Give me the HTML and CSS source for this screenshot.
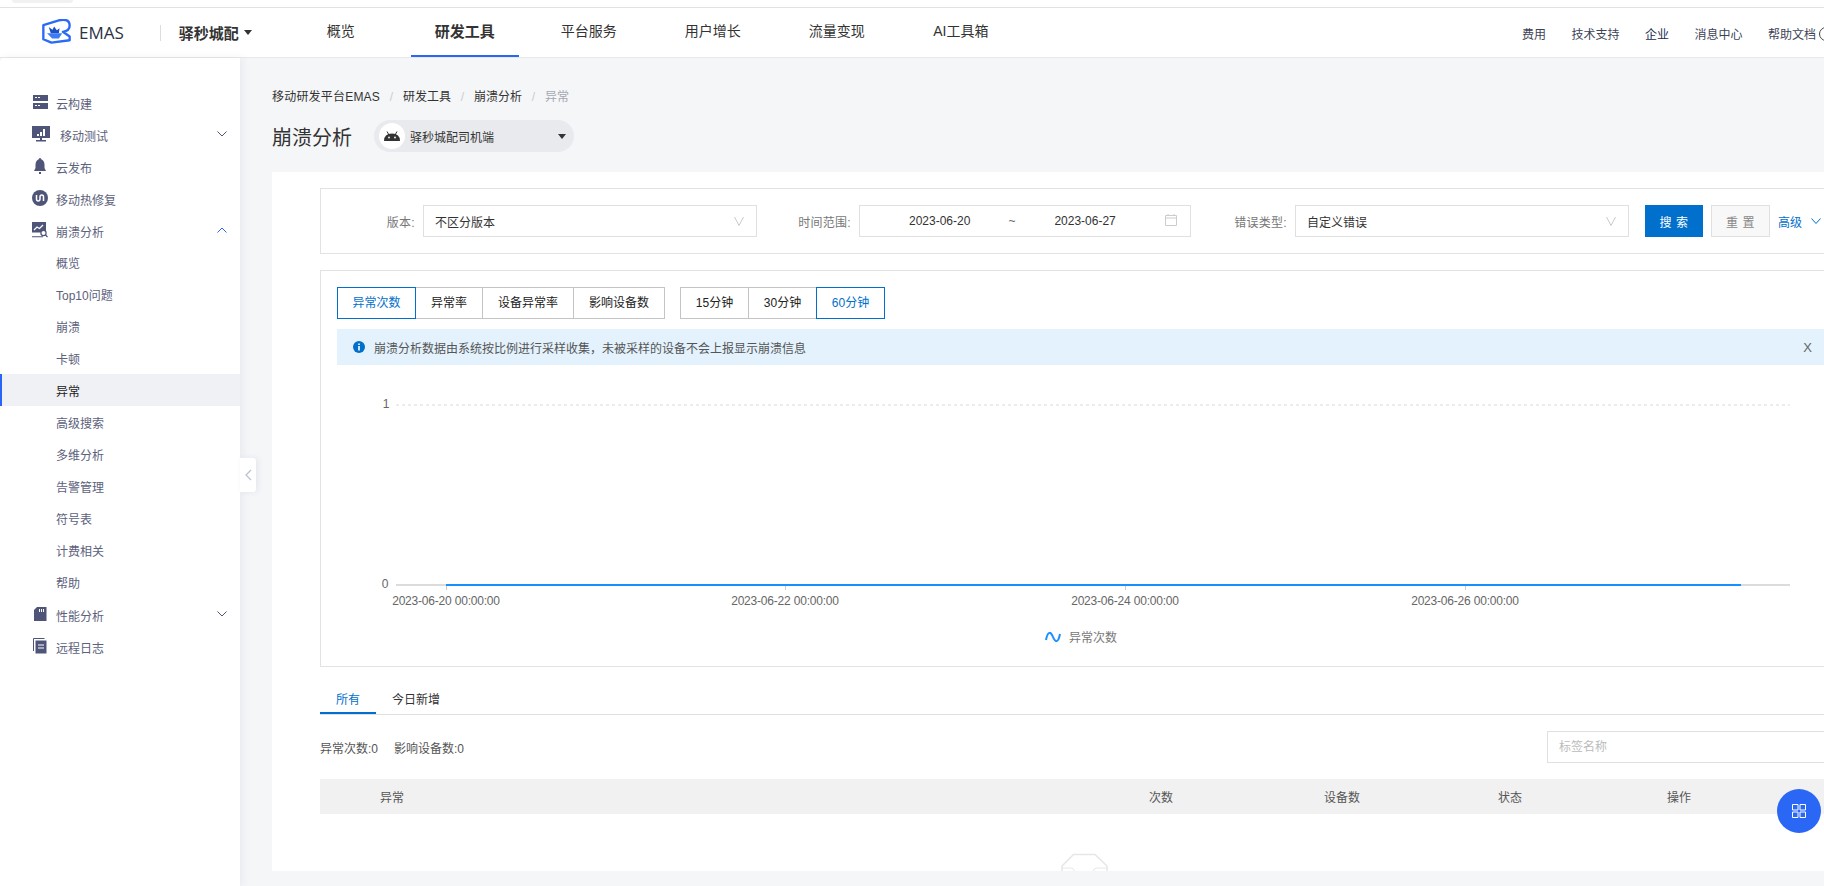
FILE: index.html
```html
<!DOCTYPE html>
<html lang="zh-CN">
<head>
  <meta charset="UTF-8">
  <title>EMAS 崩溃分析</title>
  <link rel="stylesheet" href="styles.css">
</head>
<body>
  <div class="browser-strip"><span class="browser-tab"></span></div>

  <header class="topnav">
    <svg class="logo" viewBox="0 0 86 74">
      <path d="M4 18 L50 4 Q58 2 70 3 Q82 5 82 20 Q82 35 62 38 L82 52 L82 63 L28 70 L4 60 Z" fill="none" stroke="#2a6af5" stroke-width="7" stroke-linejoin="round"/>
      <path d="M20 24 L31 32 L36 22 L44 33 L52 27 L50 42 L26 42 Z" fill="#1f4fc4"/>
      <path d="M15 42 L60 42 L50 58 L30 58 Z" fill="#3d7bf7"/>
    </svg>
    <span class="brand">EMAS</span>
    <span class="brand-sep"></span>
    <span class="project">驿秒城配</span>
    <span class="caret project-caret"></span>
    <nav class="nav-main">
      <a class="nav-item">概览</a>
      <a class="nav-item active">研发工具</a>
      <a class="nav-item">平台服务</a>
      <a class="nav-item">用户增长</a>
      <a class="nav-item">流量变现</a>
      <a class="nav-item">AI工具箱</a>
    </nav>
    <div class="nav-right">
      <a>费用</a>
      <a>技术支持</a>
      <a class="dark">企业</a>
      <a>消息中心</a>
      <a class="help">帮助文档<span class="help-ring"></span></a>
    </div>
  </header>

  <div class="layout">
    <aside class="sidebar">
      <a class="side-item">
        <svg class="side-icon" viewBox="0 0 16 16"><path d="M1 1h15v6H1zM1 9h15v6H1z" fill="#4f5578"/><path d="M3 3.500h2M6 3.500h2M3 11.500h2M6 11.500h2" stroke="#fff" stroke-width="1"/></svg>
        <span>云构建</span>
      </a>
      <a class="side-item has-child wide">
        <svg class="side-icon monitor" viewBox="0 0 18 16"><path d="M0 0h18v12H0z" fill="#4f5578"/><path d="M8 12h2v2H8zM4 14h10v1.400H4z" fill="#4f5578"/><path d="M5 8h2v2H5zM8 6h2v4H8zM11 3h2v7h-2z" fill="#fff"/></svg>
        <span>移动测试</span>
        <svg class="chev" viewBox="0 0 10 6"><path d="M.5.500 5 5 9.500.500" fill="none" stroke="#4f5578"/></svg>
      </a>
      <a class="side-item">
        <svg class="side-icon" viewBox="0 0 16 16"><path d="M8 0q1.300 0 1.500 1.600Q12.500 3 12.500 7v3l1.500 3H2l1.500-3V7Q3.500 3 6.500 1.600 6.700 0 8 0z" fill="#4f5578"/><path d="M7 14h2v2H7z" fill="#4f5578"/></svg>
        <span>云发布</span>
      </a>
      <a class="side-item">
        <svg class="side-icon" viewBox="0 0 16 16"><circle cx="8" cy="8" r="8" fill="#4f5578"/><path d="M4.500 5v4q0 2 1.700 2T8 9V7q0-2 1.800-2t1.700 2v4" fill="none" stroke="#fff" stroke-width="1.500"/></svg>
        <span>移动热修复</span>
      </a>
      <a class="side-item has-child">
        <svg class="side-icon" viewBox="0 0 16 16"><path d="M0 0h14v10.500H0zM0 14.300h11v1H0z" fill="#4f5578"/><path d="M2 8l3-3 2.500 1.500L11 3" fill="none" stroke="#fff" stroke-width="1.200"/><circle cx="11.500" cy="11" r="2.600" fill="#fff" stroke="#4f5578" stroke-width="1.200"/><path d="M13.500 13l2 2" stroke="#4f5578" stroke-width="1.200"/></svg>
        <span>崩溃分析</span>
        <svg class="chev" viewBox="0 0 10 6"><path d="M.5 5.500 5 1l4.500 4.500" fill="none" stroke="#2a66f6"/></svg>
      </a>
      <a class="side-item">概览</a>
      <a class="side-item">Top10问题</a>
      <a class="side-item">崩溃</a>
      <a class="side-item">卡顿</a>
      <a class="side-item current">异常</a>
      <a class="side-item">高级搜索</a>
      <a class="side-item">多维分析</a>
      <a class="side-item">告警管理</a>
      <a class="side-item">符号表</a>
      <a class="side-item">计费相关</a>
      <a class="side-item">帮助</a>
      <a class="side-item has-child">
        <svg class="side-icon" viewBox="0 0 16 16"><path d="M5 1h9.500v14H2V4z" fill="#4f5578"/><path d="M7 3h1v3H7zM9 3h1v3H9zM11 3h1v3h-1z" fill="#fff"/></svg>
        <span>性能分析</span>
        <svg class="chev" viewBox="0 0 10 6"><path d="M.5.500 5 5 9.500.500" fill="none" stroke="#4f5578"/></svg>
      </a>
      <a class="side-item">
        <svg class="side-icon" viewBox="0 0 16 16"><path d="M1.500 13V.5h11" fill="none" stroke="#4f5578"/><path d="M3.500 2.500h11v13h-11z" fill="#4f5578"/><path d="M6 7h6M6 10h6" stroke="#fff" stroke-width="1.200"/></svg>
        <span>远程日志</span>
      </a>
      <div class="collapse-btn">
        <svg viewBox="0 0 7 12"><path d="M6 1 1 6l5 5" fill="none" stroke="#b9bfd0" stroke-width="1.200"/></svg>
      </div>
    </aside>

    <main class="main">
      <div class="breadcrumb">
        <a class="crumb-root">移动研发平台EMAS</a><i>/</i><a>研发工具</a><i>/</i><a>崩溃分析</a><i>/</i><span>异常</span>
      </div>

      <div class="page-head">
        <h1>崩溃分析</h1>
        <div class="app-pill">
          <span class="app-avatar">
            <svg viewBox="0 0 18 10" width="18" height="10"><path d="M1 10Q1 2.500 9 2.500T17 10z" fill="#333"/><path d="M4 .5 6 4M14 .5 12 4" stroke="#333" stroke-width="1"/><circle cx="6" cy="6.500" r=".9" fill="#fff"/><circle cx="12" cy="6.500" r=".9" fill="#fff"/></svg>
          </span>
          <span class="app-name">驿秒城配司机端</span>
          <span class="caret pill-caret"></span>
        </div>
      </div>

      <section class="card">
        <div class="filter-box">
          <label class="field-label first">版本:</label>
          <div class="select w334">
            <span>不区分版本</span>
            <svg class="select-arrow" viewBox="0 0 10 10"><path d="M.5 1 5 9.500 9.500 1" fill="none" stroke="#c8c8c8"/></svg>
          </div>
          <label class="field-label second">时间范围:</label>
          <div class="date-range">
            <span class="date-from">2023-06-20</span>
            <span class="date-to-sign">~</span>
            <span class="date-to">2023-06-27</span>
            <svg class="calendar" viewBox="0 0 12 12"><path d="M.5 1.500h11v10H.5zM.5 4h11M3 0v2M9 0v2" fill="none" stroke="#ccc"/></svg>
          </div>
          <label class="field-label third">错误类型:</label>
          <div class="select w334">
            <span>自定义错误</span>
            <svg class="select-arrow" viewBox="0 0 10 10"><path d="M.5 1 5 9.500 9.500 1" fill="none" stroke="#c8c8c8"/></svg>
          </div>
          <button class="btn-primary">搜 索</button>
          <button class="btn-default">重 置</button>
          <a class="advanced">高级</a>
          <svg class="advanced-arrow" viewBox="0 0 10 6"><path d="M.5.500 5 5.500 9.500.500" fill="none" stroke="#0070cc"/></svg>
        </div>

        <div class="chart-box">
          <div class="switches">
            <div class="btn-group">
              <a class="switch w79 on">异常次数</a>
              <a class="switch w68">异常率</a>
              <a class="switch w92">设备异常率</a>
              <a class="switch w92">影响设备数</a>
            </div>
            <div class="btn-group">
              <a class="switch w69">15分钟</a>
              <a class="switch w69">30分钟</a>
              <a class="switch w69 on">60分钟</a>
            </div>
          </div>

          <div class="alert">
            <svg class="alert-icon" viewBox="0 0 12 12"><circle cx="6" cy="6" r="6" fill="#0070cc"/><path d="M5.200 2.500h1.600v1.500H5.200zM5.200 5h1.600v4.500H5.200z" fill="#fff"/></svg>
            <span>崩溃分析数据由系统按比例进行采样收集，未被采样的设备不会上报显示崩溃信息</span>
            <span class="alert-close">X</span>
          </div>

          <svg class="chart" viewBox="337 365 1506 300">
            <text class="axis-label" x="386" y="408" text-anchor="middle">1</text>
            <text class="axis-label" x="385" y="588" text-anchor="middle">0</text>
            <path d="M396 405H1790" stroke="#ececec" stroke-width="2" stroke-dasharray="3 3"/>
            <path d="M396 585H1790" stroke="#dcdcdc" stroke-width="2"/>
            <path d="M446.500 586v4M785.500 586v4M1125.500 586v4M1465.500 586v4" stroke="#ccc"/>
            <path d="M446 585H1741" stroke="#1890ff" stroke-width="2"/>
            <text class="tick-label" x="446" y="605" text-anchor="middle">2023-06-20 00:00:00</text>
            <text class="tick-label" x="785" y="605" text-anchor="middle">2023-06-22 00:00:00</text>
            <text class="tick-label" x="1125" y="605" text-anchor="middle">2023-06-24 00:00:00</text>
            <text class="tick-label" x="1465" y="605" text-anchor="middle">2023-06-26 00:00:00</text>
            <path d="M1046 640C1048 630 1051 632 1053 637S1058 644 1060 634" fill="none" stroke="#1890ff" stroke-width="2"/>
            <text class="legend-label" x="1069" y="642">异常次数</text>
          </svg>
        </div>

        <div class="tabs">
          <a class="tab active">所有</a>
          <a class="tab">今日新增</a>
        </div>

        <div class="summary">
          <span>异常次数:0</span>
          <span>影响设备数:0</span>
          <input class="tag-input" type="text" placeholder="标签名称">
        </div>

        <div class="table-head">
          <span>异常</span>
          <span>次数</span>
          <span>设备数</span>
          <span>状态</span>
          <span>操作</span>
        </div>

        <svg class="empty-icon" viewBox="0 0 48 40">
          <path d="M1 19V13L12.500 1.500H34L46 13V19" fill="none" stroke="#e6e6e6" stroke-width="1.500"/>
          <path d="M1 15H10Q13.500 15 13.500 19M32 19Q32 15 36 15H46" fill="none" stroke="#e8e8e8"/>
        </svg>
      </section>
    </main>
  </div>

  <button class="fab">
    <svg viewBox="0 0 14 14" width="14" height="14"><path d="M.5.500h5.500v5.500H.5zM8 .5h5.500v5.500H8zM.5 8h5.500v5.500H.5zM8 8h5.500v5.500H8z" fill="none" stroke="#fff"/></svg>
  </button>
</body>
</html>
```

FILE: styles.css
```css
* {
  box-sizing: border-box;
}

body {
  margin: 0;
  width: 1824px;
  height: 886px;
  overflow: hidden;
  background-color: #f5f6f8;
  color: #333;
  font-family: "Liberation Sans", "Noto Sans CJK SC", sans-serif;
  font-size: 12px;
}

a {
  text-decoration: none;
  color: inherit;
}

/* top strip of the browser */
.browser-strip {
  height: 8px;
  background-color: #fff;
  border-bottom: 1px solid #e2e2e2;
  padding-left: 12px;
}

.browser-tab {
  display: block;
  width: 61px;
  height: 3px;
  background-color: #f1f1f1;
  border-radius: 0 0 8px 8px;
}

/* header */
.topnav {
  height: 50px;
  background-color: #fff;
  border-bottom: 1px solid #e8e8e8;
  display: flex;
  align-items: center;
  padding-left: 42px;
}

.logo {
  width: 29px;
  height: 25px;
  flex: none;
  margin-top: -2px;
}

.brand {
  margin-left: 8px;
  font-family: "Open Sans", sans-serif;
  font-size: 17px;
  color: #2b3245;
}

.brand-sep {
  width: 1px;
  height: 16px;
  background-color: #ddd;
  margin-left: 36px;
}

.project {
  margin-left: 18px;
  font-size: 15px;
  font-weight: bold;
}

.caret {
  width: 0;
  height: 0;
  border-left: 4px solid transparent;
  border-right: 4px solid transparent;
  border-top: 5px solid #333;
}

.project-caret {
  margin-left: 5px;
  margin-right: -1px;
}

.nav-main {
  display: flex;
  gap: 16px;
  margin-left: 36px;
  height: 100%;
}

.nav-item {
  width: 108px;
  font-size: 14px;
  line-height: 47px;
  text-align: center;
  border-bottom: 2px solid transparent;
  height: 49px;
}

.nav-item.active {
  font-size: 15px;
  font-weight: bold;
  border-bottom-color: #2a66f6;
}

.nav-right {
  display: flex;
  gap: 25.500px;
  margin-left: auto;
  margin-right: -9px;
  padding-top: 2px;
  color: #3d4357;
}

.nav-right .dark {
  color: #1b2a52;
}

.help {
  display: flex;
  align-items: center;
  gap: 3px;
}

.help-ring {
  width: 14px;
  height: 14px;
  border: 1px solid #444;
  border-radius: 50%;
}

/* page */
.layout {
  display: flex;
  height: 828px;
}

.sidebar {
  position: relative;
  z-index: 2;
  flex: none;
  width: 240px;
  padding-top: 28px;
  background-color: #fff;
  border-top-left-radius: 4px;
  box-shadow: 2px 0 8px rgba(40, 50, 90, 0.07);
}

.side-item {
  display: flex;
  align-items: center;
  height: 32px;
  padding-left: 56px;
  color: #5c617c;
  font-size: 12px;
}

.side-item span {
  padding-top: 3px;
}

.side-item .side-icon {
  width: 16px;
  height: 16px;
  margin-left: -24px;
  margin-right: 8px;
  flex: none;
}

.side-item .monitor {
  width: 18px;
  margin-right: 10px;
  margin-left: -24px;
}

.side-item .chev {
  width: 10px;
  height: 6px;
  margin-left: auto;
  margin-right: 13px;
}

.side-item.current {
  background-color: #f0f1f5;
  border-left: 2px solid #2a66f6;
  padding-left: 54px;
  color: #222;
}

.collapse-btn {
  position: absolute;
  left: 240px;
  top: 400px;
  width: 16px;
  height: 34px;
  display: flex;
  align-items: center;
  justify-content: center;
  background-color: #fff;
  border-radius: 0 3px 3px 0;
  box-shadow: 2px 0 6px rgba(40, 50, 90, 0.08);
}

.collapse-btn svg {
  width: 7px;
  height: 12px;
}

.main {
  flex: none;
  width: 1584px;
  padding: 29px 0 0 32px;
}

.breadcrumb {
  height: 20px;
  line-height: 20px;
  display: flex;
}

.crumb-root {
  width: 108px;
  letter-spacing: 0.2px;
}

.breadcrumb i {
  font-style: normal;
  width: 23px;
  text-align: center;
  color: #ccc;
}

.breadcrumb span {
  color: #a5a8b0;
}

.page-head {
  display: flex;
  align-items: center;
  margin-top: 13px;
  height: 32px;
}

.page-head h1 {
  margin: 0;
  font-size: 20px;
  font-weight: normal;
  width: 102px;
}

.app-pill {
  display: flex;
  align-items: center;
  width: 200px;
  height: 32px;
  padding-left: 5px;
  background-color: #e9eaed;
  border-radius: 16px;
}

.app-avatar {
  display: flex;
  align-items: center;
  justify-content: center;
  width: 26px;
  height: 26px;
  background-color: #fff;
  border-radius: 50%;
}

.app-name {
  margin-left: 5px;
}

.pill-caret {
  margin-left: 64px;
}

.card {
  margin-top: 20px;
  width: 1588px;
  height: 699px;
  padding: 16px 0 0 48px;
  background-color: #fff;
  overflow: hidden;
}

.filter-box {
  display: flex;
  align-items: center;
  width: 1540px;
  height: 66px;
  border: 1px solid #e2e2e2;
}

.field-label {
  flex: none;
  width: 95px;
  margin-right: 8px;
  text-align: right;
  color: #777;
  letter-spacing: 0.3px;
}

.field-label.first,
.field-label.second {
  width: 94px;
}

.field-label.third {
  width: 96px;
}

.select {
  flex: none;
  display: flex;
  align-items: center;
  justify-content: space-between;
  height: 32px;
  padding: 0 12px 0 11px;
  border: 1px solid #e0e0e0;
}

.w334 {
  width: 334px;
}

.select-arrow {
  width: 10px;
  height: 10px;
}

.date-range {
  flex: none;
  display: flex;
  align-items: center;
  width: 332px;
  height: 32px;
  border: 1px solid #e0e0e0;
}

.date-from {
  margin-left: 49px;
}

.date-to-sign {
  margin-left: 38px;
  color: #666;
}

.date-to {
  margin-left: 39px;
}

.calendar {
  width: 12px;
  height: 12px;
  margin-left: auto;
  margin-right: 13px;
  margin-top: -2px;
}

.btn-primary,
.btn-default {
  flex: none;
  height: 32px;
  width: 58px;
  font-family: inherit;
  font-size: 12px;
  letter-spacing: 0.5px;
  padding: 0;
}

.btn-primary {
  margin-left: 16px;
  border: none;
  background-color: #0070cc;
  color: #fff;
}

.btn-default {
  width: 59px;
  margin-left: 8px;
  border: 1px solid #e0e0e0;
  background-color: #f8f8f8;
  color: #888;
}

.advanced {
  margin-left: 8px;
  color: #0070cc;
}

.advanced-arrow {
  width: 10px;
  height: 6px;
  margin-left: 9px;
}

.chart-box {
  width: 1540px;
  height: 397px;
  margin-top: 16px;
  padding: 16px 16px 0;
  border: 1px solid #e2e2e2;
}

.switches {
  display: flex;
  gap: 15px;
}

.btn-group {
  display: flex;
}

.switch {
  height: 32px;
  line-height: 30px;
  text-align: center;
  border: 1px solid #c4c4c4;
  margin-left: -1px;
  color: #222;
}

.btn-group .switch:first-child {
  margin-left: 0;
}

.switch.on {
  position: relative;
  border-color: #0070cc;
  color: #0070cc;
}

.w79 {
  width: 79px;
}

.w68 {
  width: 68px;
}

.w92 {
  width: 92px;
}

.w69 {
  width: 69px;
}

.alert {
  display: flex;
  align-items: center;
  height: 36px;
  margin-top: 10px;
  padding-left: 16px;
  background-color: #e3f2fd;
  color: #555;
}

.alert-icon {
  width: 12px;
  height: 12px;
  margin-right: 9px;
}

.alert-close {
  margin-left: auto;
  margin-right: 31px;
  color: #666;
  font-size: 13px;
}

.chart {
  display: block;
  width: 1506px;
  height: 300px;
}

.axis-label,
.tick-label,
.legend-label {
  font-size: 12px;
  fill: #666;
}

.tick-label {
  letter-spacing: -0.2px;
}

.legend-label {
  fill: #777;
}

.tabs {
  display: flex;
  width: 1540px;
  height: 32px;
  margin-top: 16px;
  border-bottom: 1px solid #e0e0e0;
}

.tab {
  width: 56px;
  height: 31px;
  line-height: 35px;
  text-align: center;
  border-bottom: 2px solid transparent;
}

.tab + .tab {
  width: 80px;
}

.tab.active {
  color: #0070cc;
  border-bottom-color: #0070cc;
}

.summary {
  display: flex;
  align-items: center;
  gap: 16px;
  width: 1540px;
  height: 32px;
  margin-top: 16px;
  color: #555;
}

.tag-input {
  width: 313px;
  height: 32px;
  margin-left: auto;
  padding-left: 11px;
  border: 1px solid #e0e0e0;
  font-family: inherit;
  font-size: 12px;
  outline: none;
}

.tag-input::placeholder {
  color: #bbb;
}

.table-head {
  display: grid;
  grid-template-columns: 769px 175px 174px 169px 1fr;
  align-items: center;
  width: 1540px;
  height: 35px;
  margin-top: 16px;
  padding-left: 60px;
  background-color: #f1f1f1;
  color: #555;
}

.empty-icon {
  display: block;
  width: 48px;
  height: 40px;
  margin: 39px 0 0 741px;
}

.fab {
  position: fixed;
  left: 1777px;
  top: 789px;
  width: 44px;
  height: 44px;
  padding: 0;
  border: none;
  border-radius: 50%;
  background-color: #2a67f5;
  display: flex;
  align-items: center;
  justify-content: center;
}
```
